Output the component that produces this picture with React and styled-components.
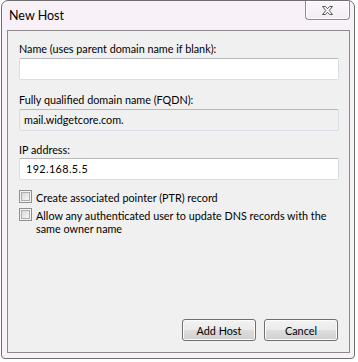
import React from "react";
import styled, { createGlobalStyle } from "styled-components";

const FONT = `Lato, "Liberation Sans", Arial, sans-serif`;

const Global = createGlobalStyle`
  html, body { margin: 0; padding: 0; background: #ffffff; }
  body { width: 358px; height: 362px; overflow: hidden; font-family: ${FONT}; }
`;

const Page = styled.div`
  width: 358px;
  height: 362px;
  padding-left: 1px;
  box-sizing: border-box;
`;

const Window = styled.div`
  width: 354px;
  height: 359px;
  box-sizing: border-box;
  border: 1px solid #6e6e6e;
  border-radius: 7px 7px 4px 4px;
  background: #f8f2f8;
  padding: 0 4px 5px 5px;
  display: flex;
  flex-direction: column;
`;

const TitleBar = styled.div`
  height: 29px;
  display: flex;
  align-items: flex-start;
  flex-shrink: 0;
`;

const Title = styled.div`
  font-size: 12.5px;
  line-height: 15px;
  color: #000;
  margin-top: 7px;
  margin-left: 2px;
`;

const CloseButton = styled.div`
  margin-left: auto;
  width: 45px;
  height: 19px;
  box-sizing: border-box;
  border: 1px solid #8d8d8d;
  border-top: none;
  border-radius: 0 0 4px 4px;
  background: linear-gradient(#fbf6fb, #f3edf3);
  display: flex;
  align-items: center;
  justify-content: center;
  box-shadow: inset 0 0 0 1px #ffffff;
`;

const Client = styled.div`
  flex: 1;
  border: 1px solid #8a8a8a;
  background: #f0f0f0;
  display: flex;
  flex-direction: column;
  padding: 10px 9px 11px 11px;
  box-sizing: border-box;
`;

const Label = styled.div`
  font-size: 10.8px;
  line-height: 15px;
  color: #000;
  margin-top: ${(p) => p.$top || 0}px;
  margin-bottom: ${(p) => (p.$bottom === undefined ? 2 : p.$bottom)}px;
`;

const Field = styled.div`
  width: 320px;
  height: 22px;
  box-sizing: border-box;
  border: 1px solid #dadde3;
  border-top-color: #b6b8bd;
  border-radius: 2px;
  background: ${(p) => (p.$readonly ? "#f0f0f0" : "#ffffff")};
  font-size: 10.8px;
  line-height: 20px;
  color: #000;
  padding-left: ${(p) => p.$pad || 4}px;
  letter-spacing: ${(p) => p.$spacing || 0}px;
`;

const CheckRow = styled.label`
  display: flex;
  align-items: flex-start;
  gap: 4px;
  margin-top: ${(p) => p.$top || 0}px;
`;

const Box = styled.span`
  width: 13px;
  height: 13px;
  box-sizing: border-box;
  border: 1px solid #8e8f8f;
  margin-top: 1px;
  flex-shrink: 0;
  padding: 1px;
  background: #f4f4f4;
  &::after {
    content: "";
    display: block;
    width: 9px;
    height: 9px;
    box-sizing: border-box;
    border: 1px solid #adadad;
    background: linear-gradient(135deg, #d8d8d8, #f7f7f7);
  }
`;

const CheckText = styled.span`
  font-size: 10.8px;
  line-height: 13px;
  color: #000;
  padding-top: 2px;
  white-space: nowrap;
`;

const ButtonRow = styled.div`
  margin-top: auto;
  display: flex;
  justify-content: flex-end;
  gap: 8px;
  padding-right: 2px;
`;

const Button = styled.button`
  width: 74px;
  height: 22px;
  box-sizing: border-box;
  border: 1px solid #707070;
  border-radius: 3px;
  background: linear-gradient(#f2f2f2 0%, #ebebeb 50%, #dddddd 51%, #cfcfcf 100%);
  box-shadow: inset 0 0 0 1px #fcfcfc;
  font-family: ${FONT};
  font-size: 10.8px;
  color: #000;
  padding: 0;
`;

function CloseGlyph() {
  return (
    <svg width="13" height="11" viewBox="0 0 13 11">
      <path
        d="M1.5 1.5 H4.5 L6.5 3.8 L8.5 1.5 H11.5 L8.2 5.5 L11.5 9.5 H8.5 L6.5 7.2 L4.5 9.5 H1.5 L4.8 5.5 Z"
        fill="#ffffff"
        stroke="#555555"
        strokeWidth="1"
        strokeLinejoin="round"
      />
    </svg>
  );
}

export default function App() {
  return (
    <Page>
      <Global />
      <Window>
        <TitleBar>
          <Title>New Host</Title>
          <CloseButton>
            <CloseGlyph />
          </CloseButton>
        </TitleBar>
        <Client>
          <Label>Name (uses parent domain name if blank):</Label>
          <Field />
          <Label $top={12}>Fully qualified domain name (FQDN):</Label>
          <Field $readonly>mail.widgetcore.com.</Field>
          <Label $top={11} $bottom={1}>IP address:</Label>
          <Field $pad={6} $spacing={0.4}>192.168.5.5</Field>
          <CheckRow $top={9}>
            <Box />
            <CheckText>Create associated pointer (PTR) record</CheckText>
          </CheckRow>
          <CheckRow $top={3}>
            <Box />
            <CheckText>
              Allow any authenticated user to update DNS records with the
              <br />
              same owner name
            </CheckText>
          </CheckRow>
          <ButtonRow>
            <Button>Add Host</Button>
            <Button>Cancel</Button>
          </ButtonRow>
        </Client>
      </Window>
    </Page>
  );
}
